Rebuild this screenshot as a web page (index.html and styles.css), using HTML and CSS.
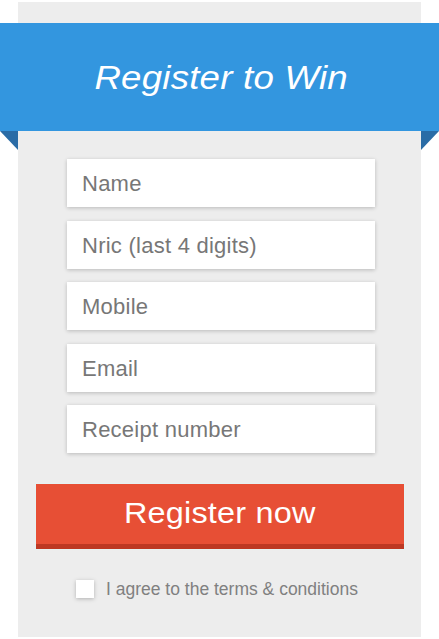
FILE: index.html
```html
<!DOCTYPE html>
<html>
<head>
<meta charset="utf-8">
<link rel="stylesheet" href="styles.css">
</head>
<body>
<div class="panel">
  <div class="ribbon"><h1 class="title">Register to Win</h1></div>
  <form class="form">
    <div class="fields">
      <div class="field">Name</div>
      <div class="field">Nric (last 4 digits)</div>
      <div class="field">Mobile</div>
      <div class="field">Email</div>
      <div class="field">Receipt number</div>
    </div>
    <div class="btn"><span class="btn-label">Register now</span></div>
    <label class="agree"><span class="box"></span><span class="agree-text">I agree to the terms &amp; conditions</span></label>
  </form>
</div>
</body>
</html>
```
FILE: styles.css
```css
html, body {
  margin: 0;
  padding: 0;
  background: #ffffff;
}
body {
  font-family: "Liberation Sans", Arial, sans-serif;
}
.panel {
  margin: 2px 0 0 18px;
  width: 403px;
  height: 635px;
  background: #ededed;
  display: flex;
  flex-direction: column;
}
.ribbon {
  position: relative;
  margin: 21px -18px 0 -18px;
  height: 108px;
  background: #3396df;
  display: flex;
  align-items: center;
  justify-content: center;
}
.ribbon::before,
.ribbon::after {
  content: "";
  position: absolute;
  top: 108px;
  width: 0;
  height: 0;
  border-top: 19px solid #2a6ca6;
}
.ribbon::before {
  left: 0;
  border-left: 18px solid transparent;
}
.ribbon::after {
  right: 0;
  border-right: 18px solid transparent;
}
.title {
  margin: 0;
  color: #ffffff;
  font-style: italic;
  font-weight: normal;
  font-size: 33px;
  letter-spacing: 0.2px;
  line-height: 1;
  transform: translate(2px, 0px) scaleX(1.11);
}
.form {
  display: flex;
  flex-direction: column;
  padding-top: 28px;
}
.fields {
  display: flex;
  flex-direction: column;
  gap: 13.5px;
  margin-left: 49px;
  width: 308px;
}
.field {
  height: 48px;
  background: #ffffff;
  box-shadow: 0 1px 4px rgba(0, 0, 0, 0.22);
  color: #777777;
  font-size: 22px;
  letter-spacing: 0.25px;
  display: flex;
  align-items: center;
  padding-left: 15px;
  padding-top: 2px;
  box-sizing: border-box;
}
.btn {
  margin: 31px 0 0 18px;
  width: 368px;
  height: 65px;
  box-sizing: border-box;
  background: #e74f35;
  border-bottom: 5px solid #bd3823;
  outline: 1px solid #e6f2f2;
  color: #ffffff;
  font-size: 30px;
  display: flex;
  align-items: center;
  justify-content: center;
  padding-bottom: 2px;
}
.btn-label {
  display: inline-block;
  letter-spacing: 0.2px;
  transform: scaleX(1.08);
}
.agree {
  margin: 29px 0 0 58px;
  display: flex;
  align-items: center;
  gap: 12px;
}
.box {
  width: 18px;
  height: 18px;
  background: #ffffff;
  box-shadow: 0 1px 4px rgba(0, 0, 0, 0.25);
}
.agree-text {
  color: #808080;
  font-size: 17.5px;
  padding-top: 1px;
}
```
